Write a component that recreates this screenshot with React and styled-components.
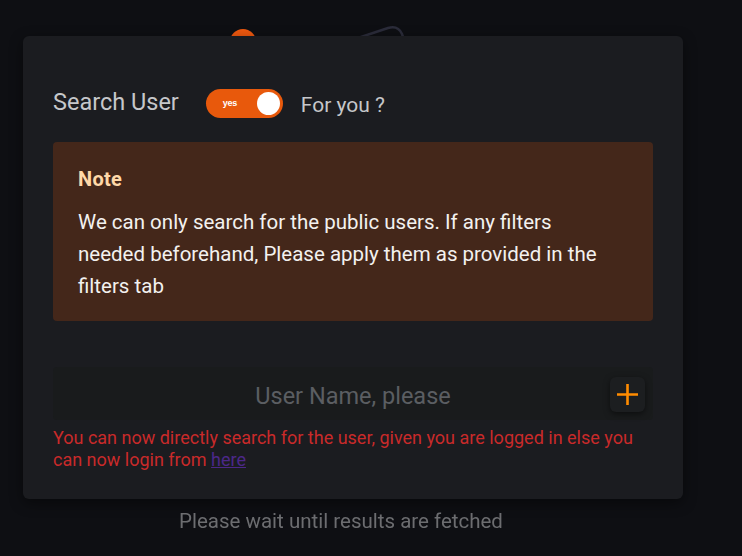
import React, { useState } from 'react';
import styled, { createGlobalStyle } from "styled-components";

const GlobalStyle = createGlobalStyle`
  body {
    margin: 0;
    background-color: #0e0f13;
    font-family: Roboto, "Noto Sans", sans-serif;
  }
`;

const Page = styled.div`
  position: relative;
  width: 742px;
  height: 556px;
  overflow: hidden;
  padding: 36px 0 0 23px;
  box-sizing: border-box;
`;

const Decor = styled.svg`
  position: absolute;
  left: 0;
  top: 0;
`;

const Card = styled.div`
  position: relative;
  width: 660px;
  height: 463px;
  box-sizing: border-box;
  background-color: #1b1c20;
  border-radius: 6px;
  box-shadow: 0 4px 14px rgba(0, 0, 0, 0.45);
  padding: 52px 30px 0 30px;
`;

const Header = styled.div`
  display: flex;
  align-items: center;
  height: 30px;
`;

const Title = styled.span`
  font-size: 23.5px;
  color: #c6c7ca;
  margin-right: 27px;
  margin-top: -3px;
`;

const Toggle = styled.button`
  width: 77px;
  height: 29px;
  border: none;
  border-radius: 15px;
  background-color: #e8590c;
  display: flex;
  align-items: center;
  justify-content: space-between;
  padding: 0 3px 0 17px;
  box-sizing: border-box;
  cursor: pointer;
  margin-right: 18px;
`;

const ToggleLabel = styled.span`
  font-size: 9px;
  font-weight: 700;
  color: #fff;
  letter-spacing: -0.3px;
`;

const Knob = styled.span`
  width: 23px;
  height: 23px;
  border-radius: 50%;
  background-color: #fff;
`;

const SubTitle = styled.span`
  font-size: 21px;
  color: #c6c7ca;
  margin-top: 4px;
`;

const Note = styled.div`
  margin-top: 24px;
  background-color: #44271a;
  border-radius: 4px;
  padding: 25px 40px 18px 25px;
  height: 179px;
  box-sizing: border-box;
`;

const NoteTitle = styled.div`
  font-size: 20px;
  font-weight: 700;
  color: #ffd8a8;
  line-height: 24px;
  letter-spacing: 0.3px;
`;

const NoteText = styled.p`
  margin: 15px 0 0 0;
  font-size: 20.5px;
  line-height: 32px;
  color: #f3f1ef;
`;

const InputWrap = styled.div`
  position: relative;
  margin-top: 46px;
  height: 53px;
  background-color: #191b1c;
  border-radius: 4px;
`;

const Input = styled.input`
  width: 100%;
  height: 100%;
  box-sizing: border-box;
  border: none;
  background: transparent;
  text-align: center;
  font-family: inherit;
  font-size: 23.5px;
  color: #d0d0d0;
  outline: none;
  padding: 4px 50px 0 50px;
  &::placeholder {
    color: #5b5e62;
  }
`;

const AddButton = styled.button`
  position: absolute;
  right: 8px;
  top: 10px;
  width: 35px;
  height: 35px;
  border: none;
  border-radius: 6px;
  background-color: #1c1e20;
  box-shadow: 0 2px 6px rgba(0, 0, 0, 0.5);
  display: flex;
  align-items: center;
  justify-content: center;
  padding: 0;
  cursor: pointer;
`;

const Hint = styled.p`
  margin: 7px 0 0 0;
  font-size: 18px;
  line-height: 22px;
  color: #c92a2a;
`;

const Link = styled.a`
  color: #4c2889;
  text-decoration: underline;
`;

const Footer = styled.div`
  width: 636px;
  text-align: center;
  margin-top: 10px;
  font-size: 20.5px;
  color: #6c6d70;
  filter: blur(0.6px);
`;

export default function App() {
  const [on, setOn] = useState(true);
  const [name, setName] = useState("");

  return (
    <Page>
      <GlobalStyle />
      <Decor width="742" height="60" viewBox="0 0 742 60">
        <circle cx="243" cy="42" r="13" fill="#f0590f" />
        <path d="M352 40 L388 28 Q398 25 402 34 L404 40" fill="none" stroke="#2b2c3a" strokeWidth="2.5" />
      </Decor>
      <Card>
        <Header>
          <Title>Search User</Title>
          <Toggle onClick={() => setOn(!on)}>
            <ToggleLabel>{on ? "yes" : "no"}</ToggleLabel>
            <Knob />
          </Toggle>
          <SubTitle>For you ?</SubTitle>
        </Header>
        <Note>
          <NoteTitle>Note</NoteTitle>
          <NoteText>
            We can only search for the public users. If any filters needed beforehand, Please apply them as provided in the filters tab
          </NoteText>
        </Note>
        <InputWrap>
          <Input
            placeholder="User Name, please"
            value={name}
            onChange={(e) => setName(e.target.value)}
          />
          <AddButton>
            <svg width="21" height="21" viewBox="0 0 21 21">
              <path d="M10.5 0 V21 M0 10.5 H21" stroke="#ff8c00" strokeWidth="2.6" />
            </svg>
          </AddButton>
        </InputWrap>
        <Hint>
          You can now directly search for the user, given you are logged in else you can now login from <Link href="#">here</Link>
        </Hint>
      </Card>
      <Footer>Please wait until results are fetched</Footer>
    </Page>
  );
}
